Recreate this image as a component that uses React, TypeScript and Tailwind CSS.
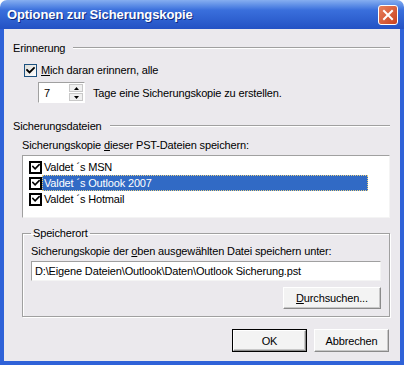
import type { ReactNode } from 'react';

const font = "font-['Liberation_Sans',Arial,sans-serif]";

// Häkchen im XP-Stil
function Check({ className = '' }: { className?: string }) {
  return (
    <svg viewBox="0 0 9 9" className={className}>
      <path d="M1 4 L3.5 6.5 L8 2" fill="none" stroke="#000" strokeWidth="1.9" strokeLinecap="square" />
    </svg>
  );
}

function XpCheckbox() {
  return (
    <div className="w-[13px] h-[13px] border border-[#1c5180] bg-gradient-to-br from-[#dcdcd7] to-white flex items-center justify-center">
      <Check className="w-[9px] h-[9px]" />
    </div>
  );
}

function ListCheckbox() {
  return (
    <div className="w-[13px] h-[13px] border-2 border-black bg-white flex items-center justify-center">
      <Check className="w-[8px] h-[8px]" />
    </div>
  );
}

function Button({ children, isDefault = false, className = '' }: { children: ReactNode; isDefault?: boolean; className?: string }) {
  return (
    <div className={`${isDefault ? 'border border-black' : ''} ${className}`}>
      <div className="h-full w-full bg-[#f3f3f3] border border-t-white border-l-white border-b-[#8a8a8a] border-r-[#8a8a8a] shadow-[inset_-1px_-1px_0_#c8c8c8] flex items-center justify-center text-[11px] text-black">
        {children}
      </div>
    </div>
  );
}

function Separator() {
  return <div className="flex-1 h-[2px] border-t border-t-[#a0a0a0] border-b border-b-white" />;
}

const files = [
  { name: 'Valdet ´s MSN', selected: false },
  { name: 'Valdet ´s Outlook 2007', selected: true },
  { name: 'Valdet ´s Hotmail', selected: false },
];

export default function App() {
  return (
    <div className={`w-[404px] h-[365px] bg-white ${font}`}>
      <div className="w-full h-full flex flex-col rounded-t-[7px] overflow-hidden">
        {/* Titelleiste */}
        <div className="h-[29px] shrink-0 flex items-center justify-between pl-[7px] pr-[6px] bg-linear-to-b from-[#86aef0] via-[#3a6fdc] via-35% to-[#2452c4]">
          <span className="text-white font-bold text-[13px] tracking-[-0.1px] [text-shadow:1px_1px_0_#0f2b80] pt-[1px]">
            Optionen zur Sicherungskopie
          </span>
          <div className="w-[20px] h-[20px] rounded-[3px] border border-white bg-linear-to-br from-[#e8805c] to-[#c9401c] flex items-center justify-center">
            <svg viewBox="0 0 12 12" className="w-[12px] h-[12px]">
              <path d="M2 2 L10 10 M10 2 L2 10" stroke="#fff" strokeWidth="2" strokeLinecap="square" />
            </svg>
          </div>
        </div>

        {/* Fensterinhalt */}
        <div className="flex-1 flex flex-col bg-[#ebe9ed] border-x-4 border-b-4 border-[#2f62d8] pl-[9px] pr-[10px] text-[11px] leading-[14px] tracking-[-0.15px] text-black">
          {/* Erinnerung */}
          <div className="mt-[12px] flex items-center gap-[8px]">
            <span>Erinnerung</span>
            <Separator />
          </div>
          <div className="mt-[8px] ml-[11px] flex items-center gap-[4px]">
            <XpCheckbox />
            <span>
              <span className="underline">M</span>ich daran erinnern, alle
            </span>
          </div>
          <div className="mt-[5px] ml-[25px] flex items-center gap-[8px]">
            <div className="w-[47px] h-[21px] flex border border-t-[#a0a0a0] border-l-[#a0a0a0] border-b-white border-r-white bg-white">
              <div className="flex-1 flex items-center pl-[5px]">7</div>
              <div className="w-[16px] flex flex-col gap-[1px] p-[1px]">
                <div className="flex-1 bg-[#f0f0f0] border border-[#c8c8c8] flex items-center justify-center">
                  <svg viewBox="0 0 5 3" className="w-[5px] h-[3px]"><path d="M2.5 0 L5 3 L0 3 Z" fill="#000" /></svg>
                </div>
                <div className="flex-1 bg-[#f0f0f0] border border-[#c8c8c8] flex items-center justify-center">
                  <svg viewBox="0 0 5 3" className="w-[5px] h-[3px]"><path d="M0 0 L5 0 L2.5 3 Z" fill="#000" /></svg>
                </div>
              </div>
            </div>
            <span>Tage eine Sicherungskopie zu erstellen.</span>
          </div>

          {/* Sicherungsdateien */}
          <div className="mt-[16px] flex items-center gap-[8px]">
            <span>Sicherungsdateien</span>
            <Separator />
          </div>
          <div className="mt-[5px] ml-[9px]">
            Sicherungskopie <span className="underline">d</span>ieser PST-Dateien speichern:
          </div>
          <div className="mt-[3px] ml-[9px] h-[63px] bg-white border border-t-[#a0a0a0] border-l-[#a0a0a0] border-b-[#f4f4f4] border-r-[#f4f4f4] pt-[3px] pl-[6px]">
            {files.map((f) => (
              <div key={f.name} className="h-[16px] flex items-center">
                <ListCheckbox />
                <div
                  className={`h-[16px] flex items-center pl-[2px] ${
                    f.selected ? 'w-[326px] bg-[#316ac5] text-white outline outline-dotted outline-[#e8d080] -outline-offset-1' : ''
                  }`}
                >
                  {f.name}
                </div>
              </div>
            ))}
          </div>

          {/* Speicherort */}
          <fieldset className="mt-[8px] ml-[9px] border border-[#a0a0a0] shadow-[inset_1px_1px_0_#fff,1px_1px_0_#fff] px-[8px] pb-[7px] flex flex-col">
            <legend className="px-[2px]">Speicherort</legend>
            <div className="mt-[4px]">
              Sicherungskopie der <span className="underline">o</span>ben ausgewählten Datei speichern unter:
            </div>
            <div className="mt-[3px] h-[20px] bg-white border border-t-[#a0a0a0] border-l-[#a0a0a0] border-b-[#f4f4f4] border-r-[#f4f4f4] flex items-center pl-[3px]">
              D:\Eigene Dateien\Outlook\Daten\Outlook Sicherung.pst
            </div>
            <Button className="mt-[6px] self-end w-[98px] h-[22px]">
              <span>
                <span className="underline">D</span>urchsuchen...
              </span>
            </Button>
          </fieldset>

          {/* Schaltflächen */}
          <div className="mt-[12px] mr-[1px] flex justify-end gap-[7px]">
            <Button isDefault className="w-[75px] h-[23px]">OK</Button>
            <Button className="w-[75px] h-[23px]">Abbrechen</Button>
          </div>
        </div>
      </div>
    </div>
  );
}
